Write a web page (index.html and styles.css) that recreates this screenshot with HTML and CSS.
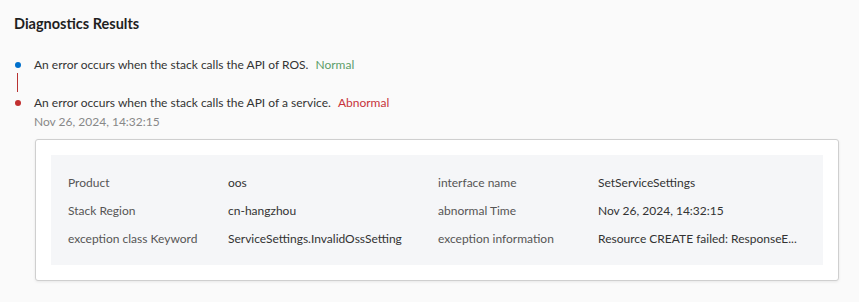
FILE: index.html
```html
<!DOCTYPE html>
<html lang="en">
<head>
    <meta charset="UTF-8">
    <title>Diagnostics Results</title>
    <link rel="stylesheet" href="styles.css">
</head>
<body>
    <div class="panel">
        <h2 class="title">Diagnostics Results</h2>

        <ul class="timeline">
            <li class="step step-ok">
                <span class="dot"></span>
                <div class="step-body">
                    <p class="step-text">An error occurs when the stack calls the API of ROS. <span class="status normal">Normal</span></p>
                </div>
            </li>
            <li class="step step-fail">
                <span class="dot"></span>
                <div class="step-body">
                    <p class="step-text">An error occurs when the stack calls the API of a service. <span class="status abnormal">Abnormal</span></p>
                    <p class="step-time">Nov 26, 2024, 14:32:15</p>
                </div>
            </li>
        </ul>

        <div class="card">
            <div class="details">
                <span class="label">Product</span>
                <span class="value">oos</span>
                <span class="label">interface name</span>
                <span class="value">SetServiceSettings</span>

                <span class="label">Stack Region</span>
                <span class="value">cn-hangzhou</span>
                <span class="label">abnormal Time</span>
                <span class="value">Nov 26, 2024, 14:32:15</span>

                <span class="label">exception class Keyword</span>
                <span class="value">ServiceSettings.InvalidOssSetting</span>
                <span class="label">exception information</span>
                <span class="value">Resource CREATE failed: ResponseE...</span>
            </div>
        </div>
    </div>
</body>
</html>
```

FILE: styles.css
```css
* {
    margin: 0;
    padding: 0;
    box-sizing: border-box;
}

body {
    font-family: Lato, "Noto Sans", sans-serif;
    font-size: 12px;
    color: #333;
    background: #fafafa;
}

.panel {
    padding: 14px 14px;
}

.title {
    font-size: 14.5px;
    font-weight: 700;
    color: #1f1f1f;
    line-height: 20px;
}

.timeline {
    list-style: none;
    margin-top: 21px;
}

.step {
    display: flex;
    position: relative;
    padding-left: 20px;
}

.step + .step {
    margin-top: 18px;
}

.dot {
    position: absolute;
    left: 1px;
    top: 7px;
    width: 6px;
    height: 6px;
    border-radius: 50%;
}

.step-ok .dot {
    background: #0070cc;
}

.step-ok::after {
    content: "";
    position: absolute;
    left: 3px;
    top: 18px;
    width: 1px;
    height: 19px;
    background: #b83232;
}

.step-fail .dot {
    background: #c23030;
}

.step-text {
    line-height: 20px;
    color: #333;
}

.status {
    margin-left: 4px;
}

.normal {
    color: #5c9e6a;
}

.abnormal {
    color: #c7323a;
}

.step-time {
    line-height: 18px;
    color: #888;
}

.card {
    margin: 8px 0 0 21px;
    width: 804px;
    background: #fff;
    border: 1px solid #cfcfcf;
    border-radius: 3px;
    box-shadow: 0 1px 3px rgba(0, 0, 0, 0.08);
    padding: 15px;
}

.details {
    display: grid;
    grid-template-columns: 160px 210px 160px 1fr;
    row-gap: 8px;
    background: #f5f6f8;
    padding: 18px 17px 16px;
    line-height: 20px;
}

.label {
    color: #555;
}

.value {
    color: #333;
    white-space: nowrap;
    overflow: hidden;
    text-overflow: ellipsis;
}
```
